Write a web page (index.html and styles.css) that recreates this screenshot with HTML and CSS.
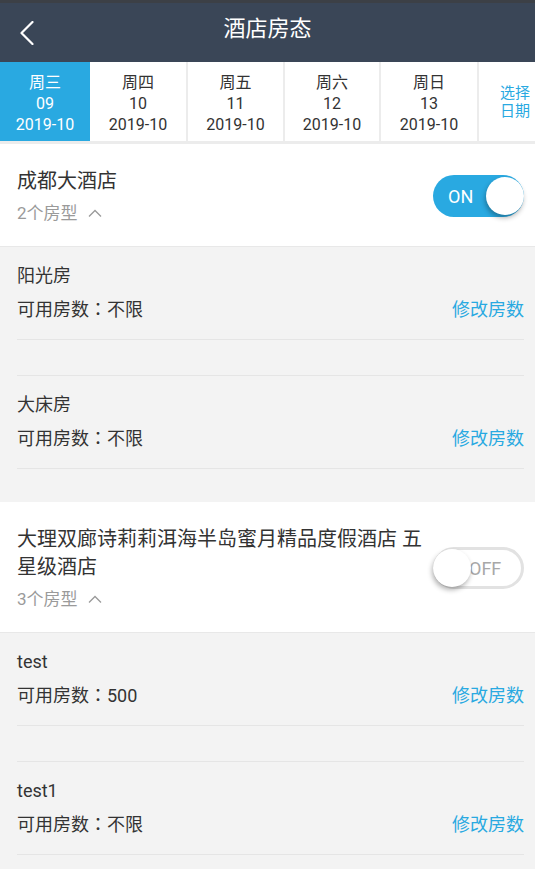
FILE: index.html
```html
<!DOCTYPE html>
<html>
<head>
    <meta charset="utf-8">
    <title>酒店房态</title>
    <link rel="stylesheet" href="styles.css">
</head>
<body>
    <div class="status-strip"></div>
    <div class="header">
        <div class="back">
            <svg width="14" height="24" viewBox="0 0 14 24">
                <polyline points="12.5,1 1.5,12 12.5,23" fill="none" stroke="#fff" stroke-width="2.2" stroke-linecap="round" stroke-linejoin="round"/>
            </svg>
        </div>
        <div class="title">酒店房态</div>
        <div></div>
    </div>

    <div class="date-bar">
        <div class="date-tab active" style="width: 90px">
            <span>周三</span><span>09</span><span>2019-10</span>
        </div>
        <div class="date-tab" style="width: 98px">
            <span>周四</span><span>10</span><span>2019-10</span>
        </div>
        <div class="date-tab" style="width: 97px">
            <span>周五</span><span>11</span><span>2019-10</span>
        </div>
        <div class="date-tab" style="width: 96px">
            <span>周六</span><span>12</span><span>2019-10</span>
        </div>
        <div class="date-tab" style="width: 98px">
            <span>周日</span><span>13</span><span>2019-10</span>
        </div>
        <div class="pick-date">选择<br>日期</div>
    </div>

    <div class="hotel">
        <div class="hotel-info">
            <div class="hotel-name">成都大酒店</div>
            <div class="hotel-sub">2个房型
                <svg class="caret" width="14" height="8" viewBox="0 0 14 8">
                    <polyline points="1,7.5 7,1.5 13,7.5" fill="none" stroke="#9a9a9a" stroke-width="1.3"/>
                </svg>
            </div>
        </div>
        <div class="toggle on">
            <span class="toggle-label">ON</span>
            <span class="knob"></span>
        </div>
    </div>
    <div class="rooms">
        <div class="room">
            <div class="room-name">阳光房</div>
            <div class="room-row">
                <span>可用房数<span class="colon">：</span>不限</span>
                <span class="edit">修改房数</span>
            </div>
        </div>
        <div class="room">
            <div class="room-name">大床房</div>
            <div class="room-row">
                <span>可用房数<span class="colon">：</span>不限</span>
                <span class="edit">修改房数</span>
            </div>
        </div>
    </div>

    <div class="hotel">
        <div class="hotel-info">
            <div class="hotel-name">大理双廊诗莉莉洱海半岛蜜月精品度假酒店 五星级酒店</div>
            <div class="hotel-sub">3个房型
                <svg class="caret" width="14" height="8" viewBox="0 0 14 8">
                    <polyline points="1,7.5 7,1.5 13,7.5" fill="none" stroke="#9a9a9a" stroke-width="1.3"/>
                </svg>
            </div>
        </div>
        <div class="toggle off">
            <span class="knob"></span>
            <span class="toggle-label">OFF</span>
        </div>
    </div>
    <div class="rooms">
        <div class="room">
            <div class="room-name">test</div>
            <div class="room-row">
                <span>可用房数<span class="colon">：</span>500</span>
                <span class="edit">修改房数</span>
            </div>
        </div>
        <div class="room">
            <div class="room-name">test1</div>
            <div class="room-row">
                <span>可用房数<span class="colon">：</span>不限</span>
                <span class="edit">修改房数</span>
            </div>
        </div>
    </div>
</body>
</html>
```

FILE: styles.css
```css
body {
    margin: 0;
    background: #f3f3f3;
    font-family: Roboto, "Noto Sans CJK SC", sans-serif;
    color: #333;
    overflow: hidden;
}
.status-strip {
    height: 3px;
    background: #3c4046;
}
.header {
    height: 59px;
    background: #3a4657;
    display: grid;
    grid-template-columns: 60px 1fr 60px;
    align-items: center;
}
.back {
    padding-left: 20px;
    display: flex;
    align-items: center;
}
.title {
    text-align: center;
    color: #fff;
    font-size: 22px;
    line-height: 30px;
    padding-bottom: 7px;
}
.date-bar {
    display: flex;
    height: 79px;
    background: #fff;
    border-bottom: 3px solid #ececec;
}
.date-tab {
    flex: none;
    box-sizing: border-box;
    border-right: 2px solid #ececec;
    padding-top: 3px;
    display: flex;
    flex-direction: column;
    align-items: center;
    justify-content: center;
    font-size: 16px;
    line-height: 21px;
    color: #333;
}
.date-tab.active {
    background: #29a9e1;
    color: #fff;
    border-right: none;
}
.pick-date {
    flex: 1;
    padding-left: 21px;
    display: flex;
    align-items: center;
    font-size: 15px;
    line-height: 18px;
    color: #29a9e1;
}
.hotel {
    background: #fff;
    display: flex;
    align-items: center;
    gap: 6px;
    padding: 23px 11px 21px 17px;
    border-bottom: 1px solid #e8e8e8;
}
.hotel-info {
    flex: 1;
}
.hotel-name {
    font-size: 20px;
    line-height: 28px;
    color: #333;
}
.hotel-sub {
    margin-top: 6px;
    font-size: 17px;
    line-height: 24px;
    color: #9a9a9a;
    display: flex;
    align-items: center;
}
.caret {
    margin-left: 10px;
}
.toggle {
    flex: none;
    width: 91px;
    height: 42px;
    box-sizing: border-box;
    border-radius: 21px;
    display: flex;
    align-items: center;
    font-size: 18px;
}
.toggle.on {
    background: #29a9e1;
    color: #fff;
    justify-content: space-between;
    padding-left: 15px;
}
.toggle.off {
    background: #fff;
    border: 3px solid #e2e2e2;
    color: #a8a8a8;
}
.knob {
    width: 38px;
    height: 38px;
    border-radius: 50%;
    background: #fff;
    box-shadow: -1px 3px 5px rgba(0, 0, 0, 0.3);
    position: relative;
    z-index: 1;
}
.toggle.off .knob {
    margin-left: -3px;
}
.toggle.off .toggle-label {
    margin-left: -2px;
}
.rooms {
    padding: 0 11px 0 17px;
}
.room {
    padding: 16px 0 16px;
    border-bottom: 1px solid #e5e5e5;
    margin-bottom: 35px;
    font-size: 18px;
    line-height: 26px;
}
.room:last-child {
    margin-bottom: 33px;
}
.room + .room {
    border-top: 1px solid #e5e5e5;
}
.room-row {
    margin-top: 8px;
    display: flex;
    justify-content: space-between;
}
.colon {
    font-family: "Noto Sans CJK JP", sans-serif;
    line-height: 0;
}
.edit {
    color: #29a9e1;
}
```
